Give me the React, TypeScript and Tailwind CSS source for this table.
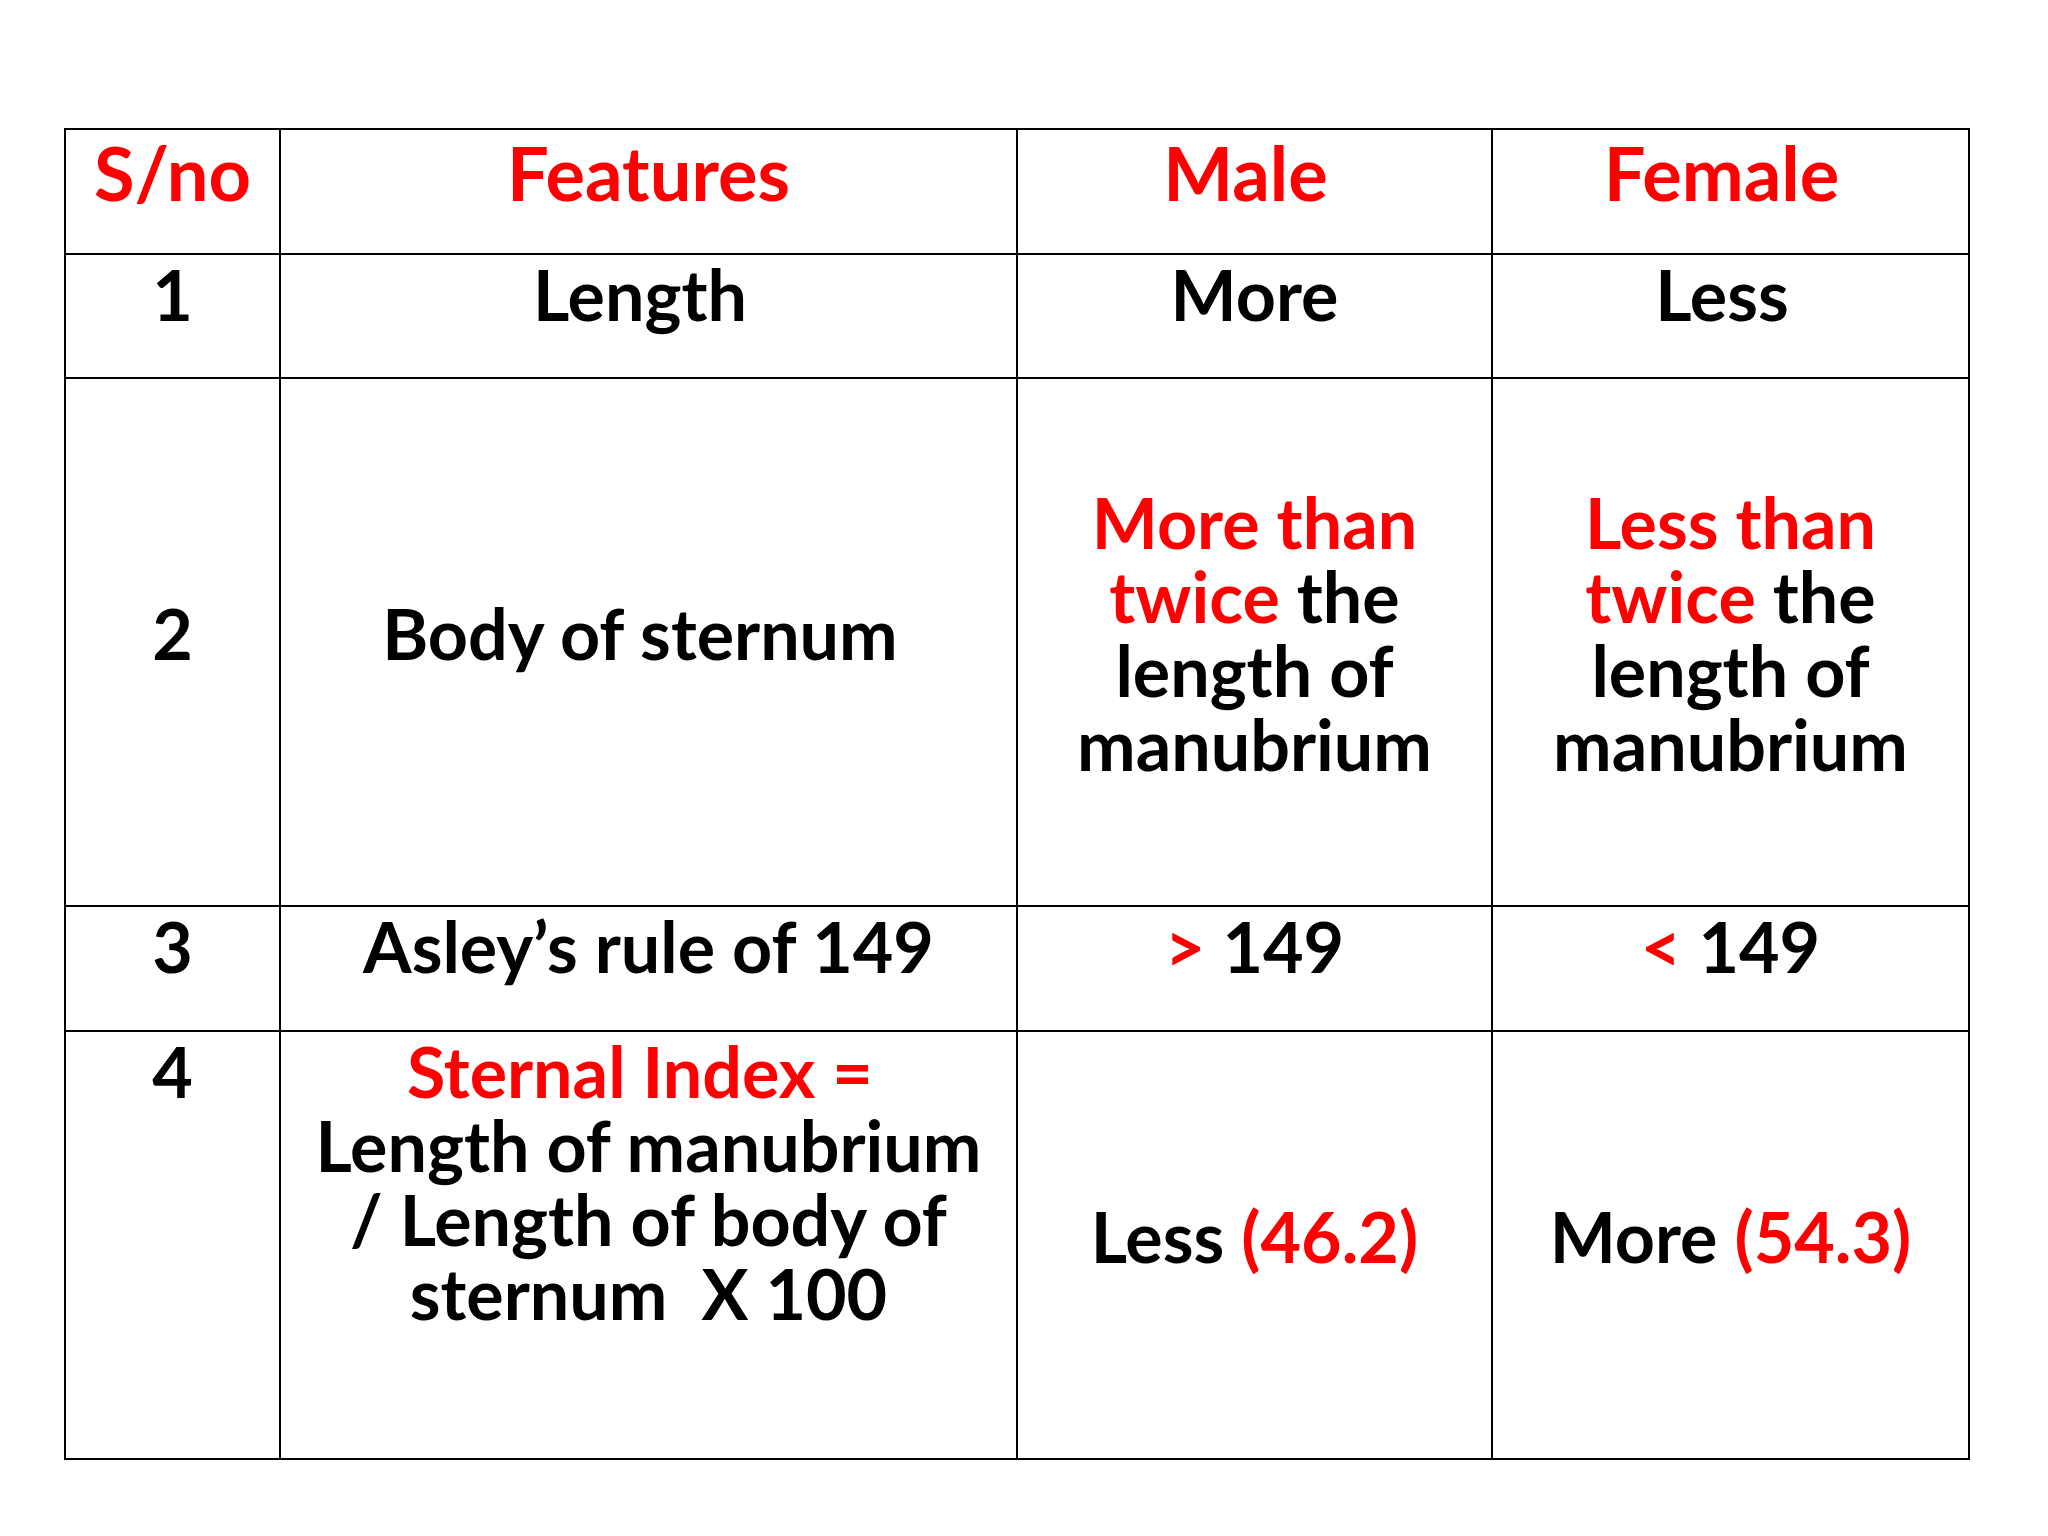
import type { ReactNode } from 'react'

const Red = ({ children }: { children: ReactNode }) => <span className="text-[#ff0000]">{children}</span>

type Cell = { content: ReactNode; middle?: boolean }
type Row = { height: string; cells: Cell[] }

// trailing nbsp mimics the trailing spaces of the original slide text
const ROWS: Row[] = [
  {
    height: 'h-[124px]',
    cells: [{ content: '1' }, { content: 'Length\u00a0' }, { content: 'More' }, { content: 'Less\u00a0' }],
  },
  {
    height: 'h-[528px]',
    cells: [
      { content: '2', middle: true },
      { content: 'Body of sternum\u00a0', middle: true },
      {
        middle: true,
        content: (
          <>
            <Red>More than</Red>
            <br />
            <Red>twice</Red> the
            <br />
            length of
            <br />
            manubrium
          </>
        ),
      },
      {
        middle: true,
        content: (
          <>
            <Red>Less than</Red>
            <br />
            <Red>twice</Red> the
            <br />
            length of
            <br />
            manubrium
          </>
        ),
      },
    ],
  },
  {
    height: 'h-[125px]',
    cells: [
      { content: '3' },
      { content: 'Asley’s rule of 149' },
      {
        content: (
          <>
            <Red>{'>'}</Red> 149
          </>
        ),
      },
      {
        content: (
          <>
            <Red>{'<'}</Red> 149
          </>
        ),
      },
    ],
  },
  {
    height: 'h-[428px]',
    cells: [
      { content: '4' },
      {
        content: (
          <>
            <Red>Sternal Index =&nbsp;</Red>
            <br />
            Length of manubrium
            <br />/ Length of body of
            <br />
            sternum&nbsp; X 100
          </>
        ),
      },
      {
        middle: true,
        content: (
          <>
            Less <Red>(46.2)</Red>
          </>
        ),
      },
      {
        middle: true,
        content: (
          <>
            More <Red>(54.3)</Red>
          </>
        ),
      },
    ],
  },
]

const HEADERS = ['S/no', 'Features', 'Male\u00a0', 'Female\u00a0']

export default function App() {
  return (
    <div className="min-h-screen bg-white pl-[64px] pt-[128px] font-['Lato','Liberation_Sans',sans-serif] font-bold text-black">
      <table className="w-[1904px] table-fixed border-collapse border-2 border-black">
        <colgroup>
          <col className="w-[215px]" />
          <col className="w-[737px]" />
          <col className="w-[475px]" />
          <col className="w-[477px]" />
        </colgroup>
        <thead>
          <tr>
            {HEADERS.map((h) => (
              <th
                key={h}
                className="h-[125px] border-2 border-black px-2 pt-[5px] align-top text-center text-[74px] leading-[75px] font-bold text-[#ff0000]"
              >
                {h}
              </th>
            ))}
          </tr>
        </thead>
        <tbody>
          {ROWS.map((row, ri) => (
            <tr key={ri}>
              {row.cells.map((c, ci) => (
                <td
                  key={ci}
                  className={`${row.height} border-2 border-black px-2 text-center text-[70px] leading-[74px] ${
                    c.middle ? 'align-middle pb-[18px]' : 'align-top pt-[2px]'
                  }`}
                >
                  {c.content}
                </td>
              ))}
            </tr>
          ))}
        </tbody>
      </table>
    </div>
  )
}
